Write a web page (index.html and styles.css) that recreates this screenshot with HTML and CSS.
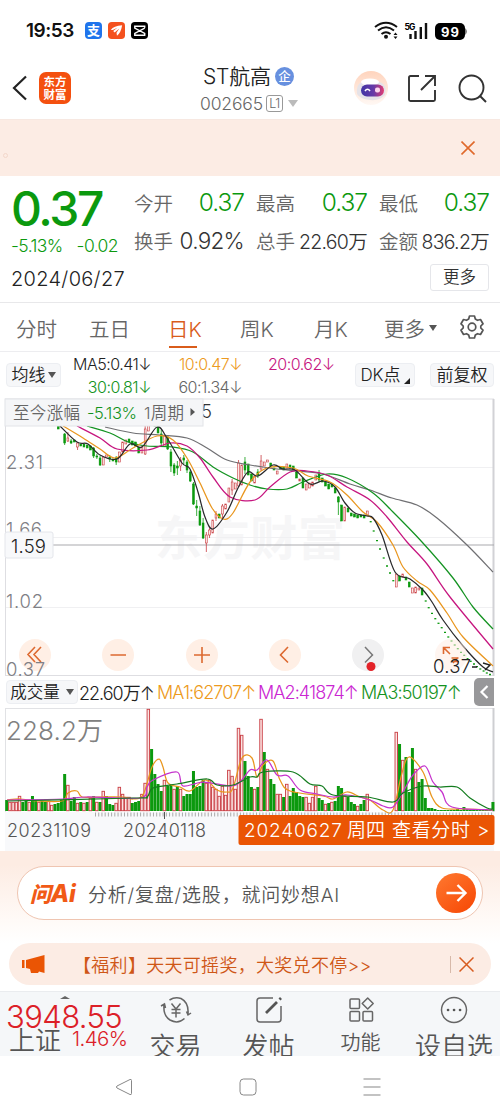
FILE: index.html
```html
<!DOCTYPE html>
<html lang="zh-CN">
<head>
<meta charset="utf-8">
<title>ST航高 002665</title>
<link rel="stylesheet" href="styles.css">
</head>
<body>
<div class="phone">
  <div class="status">
    <span class="clock">19:53</span>
    <span class="app app-pay">支</span>
    <svg class="app" viewBox="0 0 18 18"><rect width="18" height="18" rx="4" fill="#f4511e"/><path d="M3 8.500Q6 4 15 3.500Q13.500 12 9.500 14.500L9 11.500L12 7L7 11L5.500 9.500L10 6L5 8.500Z" fill="#fff"/></svg>
    <svg class="app" viewBox="0 0 18 18"><rect width="18" height="18" rx="4" fill="#000"/><path d="M14.500 6V4.500H4V6.500L14.500 12V14H4V12L14.500 6.500" fill="none" stroke="#fff" stroke-width="1.500"/></svg>
    <svg class="signals" width="95" height="20" viewBox="373 20 95 20">
      <g fill="none" stroke="#111" stroke-width="2"><path d="M375 26Q386 17.500 397 26M378 29.500Q386 23 394 29.500M381.500 33Q386 29.500 390.500 33"/></g>
      <circle cx="386" cy="35.700" r="2" fill="#111"/><path d="M393.500 34L395.500 31.500L397.500 34ZM393.500 35.500L395.500 38L397.500 35.500Z" fill="#111"/>
      <text x="404.500" y="28.500" class="g5" textLength="11">5G</text>
      <path d="M410.500 33V38M415.500 30V38M420.800 26V38M426 22V38" stroke="#111" stroke-width="2.400"/>
      <rect x="435" y="22" width="30" height="17" rx="5"/><path d="M465.500 27Q467.500 30.500 465.500 34Z"/>
      <text x="441" y="35.500" class="bat" textLength="18">99</text>
    </svg>
  </div>

  <header class="head">
    <svg class="back" width="16" height="28" viewBox="0 0 16 28"><path d="M14 2.500L2 14L14 25.500" fill="none" stroke="#222" stroke-width="2.200"/></svg>
    <div class="brand">东方<br>财富</div>
    <div class="title">
      <div class="name">ST航高<span class="ent">企</span></div>
      <div class="code"><span class="num">002665</span><span class="lv">L1</span><i class="caret big"></i></div>
    </div>
    <svg class="bot" width="36" height="36" viewBox="0 0 36 36">
      <defs><linearGradient id="visor"><stop offset="0" stop-color="#4134a5"/><stop offset=".55" stop-color="#663aa7"/><stop offset="1" stop-color="#e43c72"/></linearGradient><linearGradient id="halo" x2="0" y2="1"><stop stop-color="#ffd4bd"/><stop offset="1" stop-color="#fff8f4"/></linearGradient></defs>
      <circle cx="18" cy="18" r="17" fill="url(#halo)"/><path d="M4 24Q3 14 9 12Q19 8 29 13Q34 16 32 25Q27 31 17 30Q7 29 4 24Z" fill="#e6e3e8"/><ellipse cx="17" cy="12" rx="9" ry="3.500" fill="#fff"/><rect x="8" y="14.500" width="23" height="12" rx="6" fill="url(#visor)"/><path d="M12 21Q14.500 17.500 17 21" fill="none" stroke="#fff" stroke-width="1.600"/><rect x="22" y="17.500" width="5" height="5" rx="2" fill="#fbd5ed"/>
    </svg>
    <svg class="share" width="28" height="28" viewBox="0 0 28 28"><path d="M11 1H2.500Q1 1 1 2.500V24.500Q1 26 2.500 26H25.500Q27 26 27 24.500V15M17 1H27V11M27 1L13 15" fill="none" stroke="#333" stroke-width="1.900"/></svg>
    <svg class="search" width="29" height="29" viewBox="0 0 29 29"><g fill="none" stroke="#333" stroke-width="1.900"><circle cx="13.500" cy="13.500" r="12"/><path d="M22 22L28 28"/></g></svg>
  </header>

  <div class="banner"><i class="dot"></i><svg width="14" height="14" viewBox="0 0 14 14"><path d="M.5 .5L13.500 13.500M13.500 .5L.5 13.500" stroke="#e06a2c" stroke-width="1.600"/></svg></div>

  <section class="quote">
    <div class="price">
      <div class="last">0.37</div>
      <div class="chg"><span>-5.13%</span><span>-0.02</span></div>
      <div class="date">2024/06/27</div>
    </div>
    <div class="stats">
      <div class="stat"><label>今开</label><b class="up">0.37</b></div>
      <div class="stat"><label>最高</label><b class="up">0.37</b></div>
      <div class="stat"><label>最低</label><b class="up">0.37</b></div>
      <div class="stat"><label>换手</label><b class="wide">0.92%</b></div>
      <div class="stat"><label>总手</label><b>22.60万</b></div>
      <div class="stat"><label>金额</label><b>836.2万</b></div>
      <button class="more">更多</button>
    </div>
  </section>

  <nav class="tabs">
    <span>分时</span><span>五日</span><span class="on">日K</span><span>周K</span><span>月K</span><span>更多<i class="caret"></i></span>
    <svg width="26" height="26" viewBox="0 0 26 26"><g fill="none" stroke="#555" stroke-width="1.700" stroke-linejoin="round"><path d="M10.500 2H15.500L16.300 5L18.500 6.300L21.500 5.500L24 9.800L21.800 12V14L24 16.200L21.500 20.500L18.500 19.700L16.300 21L15.500 24H10.500L9.700 21L7.500 19.700L4.500 20.500L2 16.200L4.200 14V12L2 9.800L4.500 5.500L7.500 6.300L9.700 5Z"/><circle cx="13" cy="13" r="3.800"/></g></svg>
  </nav>

  <section class="mas">
    <div class="chip">均线<i class="caret"></i></div>
    <div class="malist"><span class="k">MA5:0.41↓</span><span class="o">10:0.47↓</span><span class="m">20:0.62↓</span><span class="g">30:0.81↓</span><span class="s">60:1.34↓</span></div>
    <div class="chip dk">DK点<i class="corner"></i></div>
    <div class="chip fq">前复权</div>
  </section>

  <section class="kline">
    <svg width="500" height="278" viewBox="0 398 500 278">
      <text class="wm" x="155" y="555" textLength="190">东方财富</text>
      <path d="M5 467.500H494M5 537.500H494M5 607.500H494" stroke="#f0f0f2"/>
      <path d="M5 399H494M5.500 399V676M5 675.500H494" stroke="#dedee2" fill="none"/>
      <path d="M493.500 399V676" stroke="#d2d2d6" stroke-width="2"/>
      <g class="axis"><text x="6" y="469" textLength="37">2.31</text><text x="6" y="536" textLength="36">1.66</text><text x="6" y="608" textLength="37">1.02</text></g>
      <path d="M5 545H494" stroke="#a9a9ad"/>
      <g id="candles"></g><g id="averages" fill="none" stroke-width="1.250"></g>
      <rect x="5" y="532" width="48" height="26" rx="2" fill="#f8f9fb" stroke="#e4e6eb"/><text class="cross" x="11" y="552.500" textLength="35">1.59</text>
      <text class="peak" x="201" y="418">5</text>
      <rect x="5" y="399" width="198" height="27" fill="#f5f6f8" stroke="#e2e4e8"/>
      <g class="tip"><text x="13" y="418.500" textLength="67">至今涨幅</text><text x="87" y="418.500" textLength="50" fill="#12921b">-5.13%</text><text x="144" y="418.500" textLength="40">1周期</text></g><path d="M190.500 408V416L195 412Z" fill="#555"/>
      <g fill="#ffece1" fill-opacity=".85"><circle cx="35" cy="655" r="16"/><circle cx="118" cy="655" r="16"/><circle cx="202" cy="655" r="16"/><circle cx="285" cy="655" r="16"/><circle cx="451" cy="655" r="16" fill-opacity=".5"/></g><circle cx="368" cy="655" r="16" fill="#f0f0f1"/>
      <g fill="none" stroke="#dd6930" stroke-width="1.600"><path d="M35 647L28 654.500L35 662M41 647L34 654.500L41 662M110.500 655H126M194 655H210M202 647V663M288 647L280.500 655L288 662.500M443.500 654V647.500H450M444 648L450 654M451.500 658H458.500M458 657.500L453 663M452 661.500H459"/></g>
      <path d="M365 647L372.500 655L365 662.500" fill="none" stroke="#777" stroke-width="1.500"/><circle cx="371" cy="666.500" r="4.500" fill="#e32228"/>
      <text class="axisv" x="6" y="675.500" textLength="39">0.37</text>
      <text class="cross" x="433" y="672.500" textLength="38">0.37</text><path d="M472 667H477M483 663L490 665L485 670" fill="none" stroke="#222" stroke-width="1.400"/>
    </svg>
  </section>

  <div class="volhead"><div class="chip">成交量<i class="caret"></i></div><span class="k">22.60万↑</span><span class="o">MA1:62707↑</span><span class="p">MA2:41874↑</span><span class="g">MA3:50197↑</span><svg width="20" height="28" viewBox="0 0 20 28"><rect width="26" height="28" rx="5" fill="#98989a"/><path d="M13.500 8L7.500 14L13.500 20" fill="none" stroke="#fff" stroke-width="2.200"/></svg></div>

  <section class="volume">
    <svg width="500" height="143" viewBox="0 708 500 143">
      <path d="M5 812H494V851H5Z" fill="#f8f9fb"/>
      <path d="M5 708.500H494M5.500 708V812" stroke="#e1e2e5" fill="none"/><path d="M493.500 708V812" stroke="#cecfd2" stroke-width="2"/>
      <text class="scale" x="6" y="740" textLength="97">228.2万</text>
      <g id="volumes"></g><g id="volavg" fill="none" stroke-width="1.250"></g>
      <path d="M95 814.500H493" stroke="#aaa" stroke-width="4" stroke-dasharray="1 2.220"/><path d="M164.500 812V819" stroke="#555"/>
      <g class="dates"><text x="7" y="837" textLength="84">20231109</text><text x="123" y="837" textLength="83">20240118</text></g>
      <rect x="238.500" y="815" width="256" height="30" rx="2" fill="#ea5504"/>
      <g class="go"><text x="244" y="837" textLength="98">20240627</text><text x="347" y="837" textLength="38">周四</text><text x="392" y="837" textLength="78">查看分时</text><text x="477" y="837" textLength="11">&gt;</text></g>
    </svg>
  </section>

  <section class="ask"><div class="askbox"><span class="logo"><em>问</em>Ai</span><span class="hint">分析/复盘/选股，就问妙想AI</span><svg width="40" height="40" viewBox="0 0 40 40"><defs><linearGradient id="og" x2=".8" y2="1"><stop stop-color="#ff7930"/><stop offset="1" stop-color="#f74b08"/></linearGradient></defs><circle cx="20" cy="20" r="20" fill="url(#og)"/><path d="M10.500 20H29M21.500 12L29.500 20L21.500 28" fill="none" stroke="#fff" stroke-width="2.400"/></svg></div></section>

  <div class="promo"><svg class="horn" width="23" height="20" viewBox="0 0 23 20"><path d="M0 6H2.500V14H0ZM4 6L22.500 1V19L17 17.500L16 19H9L8 15L4 14Z" fill="#ea5504"/></svg><span>【福利】天天可摇奖，大奖兑不停&gt;&gt;</span><i></i><svg width="15" height="15" viewBox="0 0 15 15"><path d="M.5 .5L14.500 14.500M14.500 .5L.5 14.500" stroke="#d75c20" stroke-width="1.500"/></svg></div>

  <footer class="tools">
    <div class="index"><i></i><div class="pt">3948.55</div><div class="sub"><span>上证</span><b>1.46%</b></div></div>
    <div class="tool"><svg width="32" height="28" viewBox="0 0 32 28"><g fill="none" stroke="#666" stroke-width="1.500"><path d="M9.500 4Q15 .5 21 2.500Q29 6.500 28 18M24.500 22.500Q18 28.500 10 24Q3 19.500 4 9M1 10L4.500 8L5.500 12M31 17L28 19L26.500 15.500M11.500 7.500L16 13L20.500 7.500M11.500 13.500H20.500M11.500 17H20.500M16 13V21.500"/></g></svg><span>交易</span></div>
    <div class="tool"><svg width="28" height="28" viewBox="0 0 28 28"><path d="M18 2H5Q2 2 2 5V23Q2 26 5 26H23Q26 26 26 23V10" fill="none" stroke="#666" stroke-width="1.500"/><path d="M11 17L22 6M24.500 3.500L26 2" stroke="#555" stroke-width="2.800"/></svg><span>发帖</span></div>
    <div class="tool small"><svg width="26" height="28" viewBox="0 0 26 28"><g fill="none" stroke="#666" stroke-width="1.500" stroke-linejoin="round"><rect x="1" y="3" width="9.500" height="9.500" rx="1"/><rect x="1" y="15.500" width="9.500" height="9.500" rx="1"/><rect x="14" y="15.500" width="9.500" height="9.500" rx="1"/><path d="M18.700 2L24.200 7.500L18.700 13L13.200 7.500Z"/></g></svg><span>功能</span></div>
    <div class="tool"><svg width="28" height="28" viewBox="0 0 28 28"><circle cx="14" cy="14" r="12.500" fill="none" stroke="#666" stroke-width="1.500"/><path d="M8 14H8.100M14 14H14.100M20 14H20.100" stroke="#555" stroke-width="2.600" stroke-linecap="round"/></svg><span>设自选</span></div>
  </footer>

  <div class="keys"><svg width="18" height="18" viewBox="0 0 18 18"><path d="M15 1.500L2 8Q.7 9 2 10L15 16.500Q16.500 17 16.500 15.500V2.500Q16.500 1 15 1.500Z" fill="none" stroke="#888"/></svg><svg width="18" height="18" viewBox="0 0 18 18"><rect x="1" y="1" width="16" height="16" rx="3.500" fill="none" stroke="#888"/></svg><svg width="18" height="18" viewBox="0 0 18 18"><path d="M.5 1H17.500M.5 9H17.500M.5 17H17.500" stroke="#888" stroke-width="1.200"/></svg></div>
</div>
<script src="chart.js"></script>
</body>
</html>
```
FILE: styles.css
```css
* { box-sizing: border-box; }
body { margin: 0; background: #fff; font-family: Inter, "Noto Sans CJK SC", sans-serif; font-weight: 350; color: #333; }
svg { display: block; flex: none; }
i { display: block; font-style: normal; }
b { font-weight: 350; }
.phone { width: 500px; height: 1118px; overflow: hidden; white-space: nowrap; }
.status { height: 60px; display: flex; align-items: center; padding: 1px 32px 0 26px; }
.clock { width: 59px; font-size: 19px; font-weight: 600; letter-spacing: -.5px; color: #111; }
.app { width: 17px; height: 17px; margin-right: 6px; }
.app-pay { background: #1f74ec; color: #fff; border-radius: 4px; font-size: 13px; font-weight: 700; line-height: 17px; text-align: center; }
.signals { margin-left: auto; }
.g5 { font-size: 8.5px; font-weight: 700; }
.bat { font-size: 13px; font-weight: 700; fill: #fff; }

.head { height: 59px; position: relative; display: flex; align-items: center; padding: 0 13px 3px 12px; }
.brand { width: 32px; height: 32px; margin-left: 11px; border-radius: 7px; background: #f4500f; color: #fff; font: 700 11.500px/13px "Noto Sans CJK SC", sans-serif; text-align: center; padding-top: 3px; }
.title { margin-left: 129px; width: 110px; padding-top: 3px; }
.name { display: flex; align-items: center; font-size: 21px; line-height: 28px; color: #222; padding-left: 3px; letter-spacing: -.2px; }
.ent { width: 19px; height: 19px; margin-left: 4px; border-radius: 50%; background: #6790df; color: #fff; font-size: 12.500px; font-weight: 500; line-height: 19px; text-align: center; }
.code { display: flex; align-items: center; height: 26px; font-size: 17.500px; color: #666; }
.num { letter-spacing: -.15px; width: 66px; }
.lv { border: 1px solid #999; border-radius: 3px; width: 17px; height: 17px; font-size: 12.500px; line-height: 15px; text-align: center; letter-spacing: -.5px; }
.caret { width: 0; height: 0; border: 4px solid transparent; border-top: 6px solid #555; border-bottom: 0; }
.caret.big { border-width: 7px 5px 0; border-top-color: #bbb; margin-left: 5px; }
.bot { margin-left: 43px; }
.share { margin-left: 19px; margin-top: 2px; }
.search { margin-left: auto; }

.banner { height: 57px; background: #fcece4; border-top: 1px solid #f7e8e1; display: flex; align-items: center; justify-content: space-between; padding: 0 25px 0 3px; }
.dot { width: 5px; height: 5px; border: 1px solid #f3d7ca; border-radius: 50%; margin-top: 14px; }

.quote { height: 127px; display: flex; border-bottom: 1px solid #e8e8ea; }
.price { width: 134px; padding: 10px 0 0 11px; color: #0b990e; }
.last { font-size: 48px; font-weight: 500; line-height: 46px; letter-spacing: -2.400px; }
.chg { display: flex; gap: 14px; margin-top: 3px; font-size: 17.500px; line-height: 22px; letter-spacing: -.6px; }
.date { margin-top: 10px; font-size: 20px; line-height: 24px; color: #222; letter-spacing: .3px; }
.stats { width: 355px; display: grid; grid-template-columns: 110px 111px 110px; column-gap: 12px; grid-template-rows: 38px 38px 32px; padding-top: 7px; }
.stat { display: flex; justify-content: space-between; align-items: center; }
.stat label { font-size: 19.500px; color: #666; }
.stat b { font-size: 19.500px; letter-spacing: -.7px; }
.stat .up { font-size: 24.500px; letter-spacing: -1px; color: #0b990e; }
.stat .wide { font-size: 22.500px; letter-spacing: -.7px; }
.more { grid-column: 3; justify-self: end; align-self: start; width: 59px; height: 27px; margin-top: 5px; background: #fff; border: 1px solid #e5e6ea; border-radius: 3px; font: 350 16.500px/20px "Noto Sans CJK SC", sans-serif; color: #333; padding: 0 0 3px; }

.tabs { height: 49px; display: grid; grid-template-columns: 73px 76px 74px 75px 71px 74px 26px; align-items: center; padding-left: 16px; font-size: 20.500px; color: #666; border-bottom: 1px solid #ededf0; }
.tabs span { display: flex; align-items: center; height: 48px; padding-top: 1px; }
.tabs span:nth-child(4) { padding-left: 1px; }
.tabs span:nth-child(6) { gap: 4px; margin-left: -1px; }
.tabs .on { color: #d95c1b; margin-left: 3px; width: 33px; background: linear-gradient(#d95c1b, #d95c1b) 1px 43px / 28px 2px no-repeat; }
.mas { height: 46px; display: flex; align-items: flex-start; padding: 11px 6px 0 6px; }
.chip { height: 24px; width: 55px; background: #f6f7f9; border: 1px solid #eceef2; border-radius: 4px; display: flex; align-items: center; justify-content: center; gap: 2px; font-size: 17px; line-height: 20px; color: #222; }
.malist { width: 283px; margin-top: -10px; padding-left: 12px; display: grid; grid-template-columns: 78px 2px 102px 85px; grid-template-rows: 23px 23px; font-size: 16px; line-height: 23px; letter-spacing: -.5px; }
.malist .k { grid-area: 1 / 1 / 2 / 3; }
.malist .o { grid-area: 1 / 3; justify-self: end; margin-right: 13px; }
.malist .m { grid-area: 1 / 4; padding-left: 13px; }
.malist .g { grid-area: 2 / 1; justify-self: end; }
.malist .s { grid-area: 2 / 3; justify-self: end; margin-right: 13px; }
.k { color: #222; } .o { color: #ed9a20; } .m { color: #c6157f; } .g { color: #149322; } .s { color: #666; } .p { color: #ca25d2; }
.dk { width: 60px; margin-left: 11px; gap: 3px; }
.corner { width: 0; height: 0; border: 3px solid transparent; border-right-color: #222; border-bottom-color: #222; margin-top: 12px; }
.fq { width: 64px; margin-left: auto; }
.kline { height: 278px; }
.wm { font-size: 47px; font-weight: 700; fill: #f6f6f7; }
.axis, .axisv { font-size: 18.500px; fill: #808085; }
.cross { font-size: 18.500px; fill: #222; }
.peak { font-size: 18.500px; fill: #333; }
.tip { font-size: 16.500px; fill: #666; }
.volhead { height: 32px; display: flex; align-items: center; padding-left: 6px; font-size: 18px; letter-spacing: -.9px; }
.volhead .chip { width: 72px; height: 24px; gap: 6px; letter-spacing: 0; margin-right: 1px; font-size: 16.500px; }
.volhead span.k { width: 78px; letter-spacing: -1px; } .volhead .o { width: 101px; } .volhead .p { width: 103px; } .volhead .g { width: 113px; }
.volume { height: 143px; }
.scale { font-size: 26px; fill: #808080; }
.dates { font-size: 18px; fill: #555; }
.go { font-size: 19px; fill: #fff; }
.ask { height: 92px; padding: 15px 17px 0; background: linear-gradient(#fdece3 15%, #fffaf7 75%, #fff); }
.askbox { height: 54px; border: 1px solid #efc5b1; border-radius: 27px; background: #fff; display: flex; align-items: center; padding: 0 6px 0 12px; }
.logo { width: 58px; display: flex; align-items: center; color: #f15a16; font-size: 24px; font-weight: 800; font-style: italic; letter-spacing: -.3px; }
.logo em { font-size: 21px; font-weight: 800; }
.hint { font-size: 19px; color: #555; letter-spacing: .8px; flex: 1; }
.promo { height: 42px; margin: 0 9px; border-radius: 21px; background: #fcece4; display: flex; align-items: center; padding: 0 17px 0 13px; font-size: 18px; color: #cf5717; }
.promo span { margin-left: 28px; margin-top: -1px; flex: 1; letter-spacing: .3px; }
.promo i { width: 1px; height: 17px; background: #d7b9a9; margin-right: 8px; }
.tools { height: 65px; margin-top: 6px; border-top: 1px solid #eaecef; background: #f5f7f9; overflow: hidden; display: grid; grid-template-columns: 129px 93px 93px 93px 92px; }
.index { padding: 4px 0 0 6px; }
.index i { width: 0; height: 0; border: 5px solid transparent; border-top: 0; border-bottom: 3px solid #666; margin-left: 54px; }
.pt { font-size: 31px; line-height: 36px; letter-spacing: -.6px; color: #dc2028; }
.sub { display: flex; align-items: center; height: 24px; margin-top: -9px; padding-left: 3px; gap: 11px; font-size: 26px; color: #555; }
.sub b { font-size: 20.500px; letter-spacing: -.6px; color: #dc2028; }
.tool { display: flex; flex-direction: column; align-items: center; padding-top: 4px; font-size: 26px; line-height: 38px; color: #555; }
.tool span { margin-top: 4px; }
.tool.small { font-size: 20px; }
.tool.small span { margin: 0 2px 0 0; }
.keys { height: 62px; display: grid; grid-template-columns: 18px 18px 18px; column-gap: 106px; align-items: center; padding-left: 115px; }
```
FILE: chart.js
```js
const NS = 'http://www.w3.org/2000/svg';
const X0 = 6.7, STEP = 3.22;
const GREEN = '#0b990e', RED = '#c83c42';

function add(id, tag, attrs) {
  const el = document.createElementNS(NS, tag);
  for (const key in attrs) el.setAttribute(key, attrs[key]);
  document.getElementById(id).appendChild(el);
}

function curve(id, color, flat) {
  const p = [];
  for (let i = 0; i < flat.length; i += 2) p.push([flat[i], flat[i + 1]]);
  let d = `M${p[0]}`;
  for (let i = 0; i < p.length - 1; i++) {
    const a = p[i - 1] || p[i], b = p[i], c = p[i + 1], e = p[i + 2] || c;
    d += `C${b[0] + (c[0] - a[0]) / 6} ${b[1] + (c[1] - a[1]) / 6} ${c[0] - (e[0] - b[0]) / 6} ${c[1] - (e[1] - b[1]) / 6} ${c}`;
  }
  add(id, 'path', { d, stroke: color });
}

// Volume per session: g/r = falling/rising, number = bar height
const volumes = 'g11 r9 r9 r9 r15 g9 g10 r9 g15 g11 r9 g10 g9 r10 r6 g7 g8 g11 g37 r26 g10 g14 r8 g9 r8 g9 r13 g15 r9 g9 r20 g15 g7 g6 r8 r24 r17 r14 r14 g8 g9 g10 r17 r28 r102 g62 g37 g27 g20 r31 g25 g26 r22 g25 r22 g15 g17 g17 g40 g24 g25 g31 r28 r31 r24 r22 r15 r25 r16 r41 r35 r22 r83 r76 g50 g35 g24 r22 g24 r92 g59 r42 g32 g27 r17 r17 g14 r27 g15 g23 g19 g15 g14 r14 r8 r14 r25 g13 g11 r7 g8 r9 g10 g25 g23 r15 g14 g9 g7 r5 g7 g11 r17 g0 g0 g0 g0 g0 g0 g0 g0 r79 g67 r51 g54 g19 g63 r42 g29 g32 g13 g3 g3 g2 g1 g1 g1 g1 g1 g1 g2 g1 g4 g2 g1 g1 g1 g1 g1 g1 g1 g9'.split(' ');
volumes.forEach((v, i) => {
  const h = +v.slice(1), x = X0 + i * STEP;
  if (!h) return;
  if (v[0] === 'g') add('volumes', 'rect', { x: x - 1.5, y: 811 - h, width: 3, height: h, fill: GREEN });
  else add('volumes', 'rect', { x: x - 1.3, y: 811.3 - h, width: 2.5, height: h - .6, fill: '#fbe4e3', stroke: RED, 'stroke-width': .9 });
});

// Candles: index, colour, body top, body bottom, optional wick top and bottom
const candles = [
  [16,'g',425,429],[18,'g',434,443,433,445],[19,'r',438,441,432,442],[20,'g',441,443,439,444],[21,'g',440,442],[22,'r',443,447,442,450],[23,'g',444,446],[24,'g',444,447],[25,'g',445,448],[26,'g',446,450],[27,'g',448,456,447,458],[28,'g',456,457,454,459],[29,'g',458,465,456,466],[30,'r',457,465],[31,'r',455,457],[32,'g',457,459,455,462],[33,'g',459,461],[34,'g',458,462,456,465],[35,'r',452,462],[36,'r',442,452],[37,'r',440,444],[38,'g',439,442],[39,'g',441,445],[40,'g',442,446],[41,'g',447,453],[42,'r',446,453],[43,'r',429,454,426,455],[44,'r',424,431],[46,'g',419,426],[47,'g',427,433],[48,'g',434,443,430,446],[49,'r',436,446],[50,'g',437,449,435,450],[51,'g',452,466,449,472],[52,'g',465,473,463,476],[53,'g',466,468,461,475],[54,'r',460,466,457,471],[55,'g',458,460,455,465],[56,'g',462,470,460,473],[57,'g',472,481,470,482],[58,'g',484,504,482,505],[59,'g',506,508,500,516],[60,'g',511,525,506,526],[61,'g',523,538,518,539],[62,'r',535,543,532,552],[63,'r',530,535,527,538],[64,'r',520,533],[65,'r',514,518,511,521],[66,'g',514,518],[67,'r',506,514,504,518],[68,'r',504,509],[69,'r',488,502],[70,'r',482,490,479,495],[71,'r',483,489],[72,'r',463,486,460,487],[73,'r',465,485],[74,'g',462,470,457,474],[75,'g',464,475],[76,'g',474,481],[77,'r',476,483],[78,'g',472,475,469,478],[79,'r',461,469,455,471],[80,'r',462,466],[81,'r',460,462],[82,'g',463,466],[83,'g',468,470],[84,'r',471,474],[85,'g',467,469],[86,'g',467,470],[87,'r',464,468],[88,'g',465,468],[89,'g',466,471],[90,'g',472,478],[91,'r',479,481],[92,'g',478,488],[93,'r',484,490],[94,'r',483,488],[95,'r',482,486],[96,'r',475,480],[97,'g',473,480,470,482],[98,'g',478,482],[99,'g',482,486],[100,'g',484,489],[101,'g',484,487],[102,'g',488,493],[103,'g',497,502,496,515],[104,'g',505,521],[105,'r',507,521],[106,'g',508,512],[107,'g',513,516],[108,'g',514,517],[109,'g',515,518],[110,'g',515,517],[111,'g',515,518],[112,'r',511,515],[121,'r',574,587],[122,'g',576,581],[123,'r',574,577],[124,'g',577,580],[125,'g',582,587],[126,'r',588,593],[127,'r',587,593],[128,'r',588,590],[129,'g',588,595]
];
candles.forEach(([i, c, top, bottom, high = top, low = bottom]) => {
  const x = X0 + i * STEP, stroke = c === 'g' ? GREEN : RED;
  add('candles', 'path', { d: `M${x} ${high}V${low}`, stroke, 'stroke-width': .8 });
  add('candles', 'rect', { x: x - .9, y: top, width: 1.8, height: bottom - top, fill: c === 'g' ? GREEN : '#fde9e6', stroke, 'stroke-width': .6 });
});

// One-price limit-down sessions
[370.7,521.7,373.7,531,377,540.7,380,549,383.7,558,387,566,390,573,393.3,580.7,425.7,601,428.7,607.7,432,613.3,435.3,618.7,438.5,623.3,441.7,627.7,445,632.3,448.3,637,451.5,641,454.7,645,457.8,648.7,461,652.3,464.2,655.3,467.5,658.7,470.7,661.3,474,664,477,666.7,480.3,669,483.6,671,486.8,673,490,674.5].forEach((x, i, a) => {
  if (i % 2 === 0) add('candles', 'path', { d: `M${x - 1} ${a[i + 1]}h2`, stroke: GREEN, 'stroke-width': 1.3 });
});

curve('averages', '#707073', [105,427,133,433,160,435,187,438,207,448,227,460,250,465,277,469,297,471,323,474,350,484,370,490,392,498,417,505,437,518,467,545,493,572]);
curve('averages', '#149322', [87,426,110,433,128,442,147,446,173,447,193,452,213,467,233,478,250,485,267,489,287,489,303,482,327,474,347,478,373,493,393,512,422,542,453,578,473,607,493,629]);
curve('averages', '#c6157f', [77,426,100,438,117,449,147,450,170,443,187,446,200,458,213,477,230,497,255,500,270,487,290,472,307,471,327,475,347,487,370,500,387,517,407,542,427,564,450,597,493,649]);
curve('averages', '#e9961e', [63,426,83,438,100,449,115,458,133,448,157,436,173,440,187,458,200,483,212,508,223,519,233,513,250,482,267,468,293,468,308,476,330,482,347,495,363,512,377,522,393,545,403,567,417,581,430,590,447,613,463,637,493,666]);
curve('averages', '#29292c', [55,420,60,426,77,442,88,444,100,455,117,459,130,444,142,447,157,427,167,438,182,463,190,469,198,492,205,517,213,529,227,512,238,488,248,472,258,476,273,465,283,469,295,470,310,484,323,481,335,487,345,503,355,513,367,516,373,518,382,535,395,572,410,579,423,590,432,602,443,620,463,646,483,667,493,672]);

curve('volavg', '#e9961e', [7,800,20,799,37,801,62,801,68,793,77,791,82,797,97,797,123,797,133,799,143,795,152,767,159,759,163,767,168,783,180,787,190,791,205,780,217,790,227,792,233,788,242,758,252,758,257,777,263,765,273,761,280,780,290,791,323,796,333,799,347,792,360,797,370,800,383,810,393,810,402,773,409,757,423,772,432,797,442,808,463,809,493,810]);
curve('volavg', '#c532cc', [7,800,63,799,87,797,140,798,147,787,153,780,177,772,183,786,203,782,230,786,240,782,250,770,257,770,267,760,277,775,288,776,300,790,317,794,333,797,347,795,370,800,383,806,393,807,403,792,413,775,425,766,433,782,442,792,452,807,493,810]);
curve('volavg', '#147c1f', [7,801,133,798,147,797,153,788,177,784,207,779,217,785,233,785,250,777,257,777,263,772,293,772,310,784,322,786,333,795,367,797,393,802,403,793,423,786,440,787,457,787,470,798,487,808,493,809]);
```
